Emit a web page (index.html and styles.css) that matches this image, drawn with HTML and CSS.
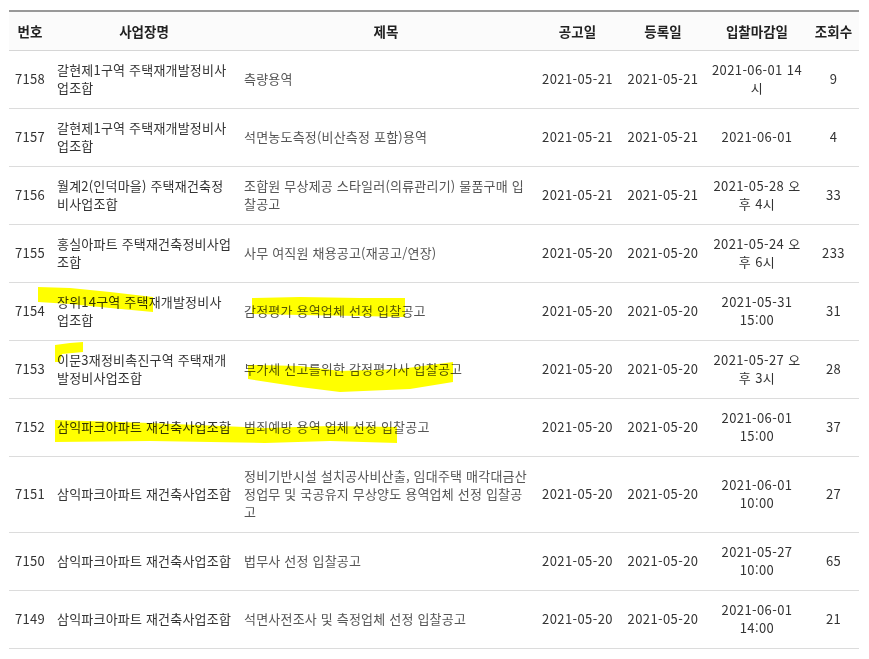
FILE: index.html
```html
<!DOCTYPE html>
<html lang="ko">
<head>
<meta charset="utf-8">
<title>입찰공고</title>
<link rel="stylesheet" href="styles.css">
</head>
<body>
<div class="page">
<table class="board">
  <colgroup>
    <col class="c-no"><col class="c-org"><col class="c-title"><col class="c-date"><col class="c-date2"><col class="c-close"><col class="c-views">
  </colgroup>
  <thead>
    <tr><th>번호</th><th>사업장명</th><th>제목</th><th>공고일</th><th>등록일</th><th>입찰마감일</th><th>조회수</th></tr>
  </thead>
  <tbody>
    <tr><td class="no">7158</td><td class="org">갈현제1구역 주택재개발정비사<br>업조합</td><td class="title">측량용역</td><td class="d">2021-05-21</td><td class="d">2021-05-21</td><td class="d">2021-06-01 14<br>시</td><td class="d">9</td></tr>
    <tr><td class="no">7157</td><td class="org">갈현제1구역 주택재개발정비사<br>업조합</td><td class="title">석면농도측정(비산측정 포함)용역</td><td class="d">2021-05-21</td><td class="d">2021-05-21</td><td class="d">2021-06-01</td><td class="d">4</td></tr>
    <tr><td class="no">7156</td><td class="org">월계2(인덕마을) 주택재건축정<br>비사업조합</td><td class="title">조합원 무상제공 스타일러(의류관리기) 물품구매 입<br>찰공고</td><td class="d">2021-05-21</td><td class="d">2021-05-21</td><td class="d">2021-05-28 오<br>후 4시</td><td class="d">33</td></tr>
    <tr><td class="no">7155</td><td class="org">홍실아파트 주택재건축정비사업<br>조합</td><td class="title">사무 여직원 채용공고(재공고/연장)</td><td class="d">2021-05-20</td><td class="d">2021-05-20</td><td class="d">2021-05-24 오<br>후 6시</td><td class="d">233</td></tr>
    <tr><td class="no">7154</td><td class="org">장위14구역 주택재개발정비사<br>업조합</td><td class="title">감정평가 용역업체 선정 입찰공고</td><td class="d">2021-05-20</td><td class="d">2021-05-20</td><td class="d">2021-05-31<br>15:00</td><td class="d">31</td></tr>
    <tr><td class="no">7153</td><td class="org">이문3재정비촉진구역 주택재개<br>발정비사업조합</td><td class="title">부가세 신고를위한 감정평가사 입찰공고</td><td class="d">2021-05-20</td><td class="d">2021-05-20</td><td class="d">2021-05-27 오<br>후 3시</td><td class="d">28</td></tr>
    <tr><td class="no">7152</td><td class="org">삼익파크아파트 재건축사업조합</td><td class="title">범죄예방 용역 업체 선정 입찰공고</td><td class="d">2021-05-20</td><td class="d">2021-05-20</td><td class="d">2021-06-01<br>15:00</td><td class="d">37</td></tr>
    <tr><td class="no">7151</td><td class="org">삼익파크아파트 재건축사업조합</td><td class="title">정비기반시설 설치공사비산출, 임대주택 매각대금산<br>정업무 및 국공유지 무상양도 용역업체 선정 입찰공<br>고</td><td class="d">2021-05-20</td><td class="d">2021-05-20</td><td class="d">2021-06-01<br>10:00</td><td class="d">27</td></tr>
    <tr><td class="no">7150</td><td class="org">삼익파크아파트 재건축사업조합</td><td class="title">법무사 선정 입찰공고</td><td class="d">2021-05-20</td><td class="d">2021-05-20</td><td class="d">2021-05-27<br>10:00</td><td class="d">65</td></tr>
    <tr><td class="no">7149</td><td class="org">삼익파크아파트 재건축사업조합</td><td class="title">석면사전조사 및 측정업체 선정 입찰공고</td><td class="d">2021-05-20</td><td class="d">2021-05-20</td><td class="d">2021-06-01<br>14:00</td><td class="d">21</td></tr>
  </tbody>
</table>
<svg class="marker" width="869" height="659" viewBox="0 0 869 659" aria-hidden="true">
  <g fill="#ffff00">
    <polygon points="38,287 70,288 110,292 153,297 153,312 110,308 70,304 38,302"/>
    <polygon points="252,298 300,297 360,298 405,298 405,317 360,316 300,315 252,314"/>
    <polygon points="55,345 70,343 83,342 83,352 62,354 60,362 55,362"/>
    <polygon points="248,365 300,366 340,371 400,369 453,362 453,382 410,389 340,392 300,387 248,379"/>
    <polygon points="55,420 150,423 265,428 330,426 397,427 397,443 330,441 265,443 150,441 55,442"/>
  </g>
</svg>
</div>
</body>
</html>
```
FILE: styles.css
```css
html, body {
  margin: 0;
  padding: 0;
  background: #ffffff;
}
.page {
  position: relative;
  padding: 10px 10px 0 9px;
  font-family: "Noto Sans CJK KR", "Noto Sans", sans-serif;
  font-size: 13px;
  color: #333333;
}
.board {
  width: 850px;
  border-collapse: collapse;
  table-layout: fixed;
  border-top: 2px solid #999999;
}
.c-no { width: 42px; }
.c-org { width: 186px; }
.c-title { width: 298px; }
.c-date { width: 85px; }
.c-date2 { width: 86px; }
.c-close { width: 102px; }
.c-views { width: 51px; }
.board th {
  background: #fbfbfb;
  font-weight: 600;
  color: #222222;
  font-size: 13.5px;
  line-height: 18px;
  padding: 10px 2px 10px;
  text-align: center;
  border-bottom: 1px solid #d6d6d6;
}
.board td {
  line-height: 18px;
  padding: 10px 6px 11px;
  border-bottom: 1px solid #dcdcdc;
  vertical-align: middle;
  white-space: nowrap;
}
.board td.no { text-align: center; padding-left: 2px; padding-right: 2px; letter-spacing: 0.3px; }
.board td.org { text-align: left; color: #333333; letter-spacing: 0.2px; }
.board td.title { text-align: left; color: #555555; padding-left: 7px; letter-spacing: 0.2px; }
.board td.d { text-align: center; padding-left: 2px; padding-right: 2px; letter-spacing: 0.4px; }
.marker {
  position: absolute;
  left: 0;
  top: 0;
  mix-blend-mode: multiply;
  pointer-events: none;
}
```
